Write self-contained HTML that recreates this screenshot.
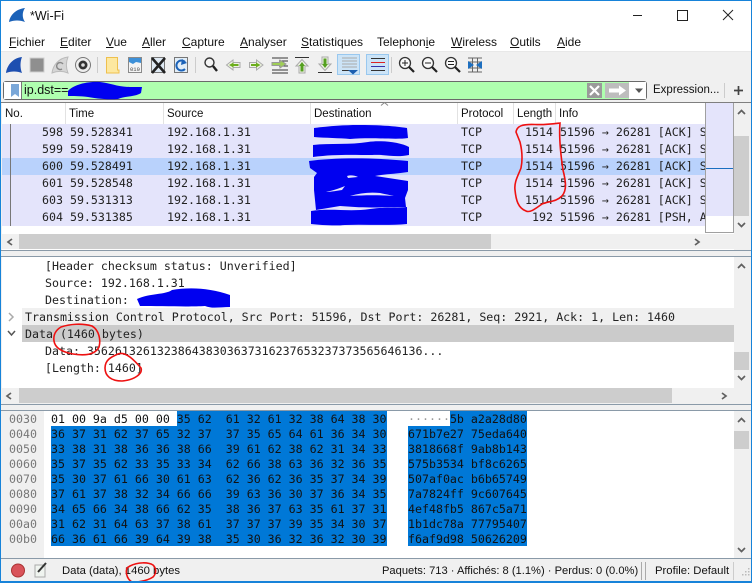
<!DOCTYPE html>
<html><head><meta charset="utf-8">
<style>
html,body{margin:0;padding:0;width:752px;height:583px;overflow:hidden;background:#f0f0f0}
*{box-sizing:border-box}
div,span.a{position:absolute}
.t{position:absolute;white-space:pre;font:12px/16px "Liberation Sans",sans-serif;color:#111}
.m{position:absolute;white-space:pre;font:11.62px/15px "DejaVu Sans Mono","Liberation Mono",monospace;color:#222}
.r{position:absolute;left:2px;width:703px;height:17px;background:#e4e4fb}
.s{position:absolute;width:1px;top:103px;height:21px;background:#e2e2e2}
.h{position:absolute;white-space:pre;font:11.62px/15px "DejaVu Sans Mono","Liberation Mono",monospace;color:#111}
.sel{position:absolute;background:#0078d7}
u{text-decoration:underline}
svg{position:absolute;left:0;top:0;overflow:visible}
</style></head>
<body>
<div style="left:0;top:0;width:752px;height:52px;background:#fff"></div>
<div style="left:0;top:51px;width:752px;height:1px;background:#e8e8e8"></div>
<div class="t" style="left:30px;top:8px;font-size:12.5px">*Wi-Fi</div>

<div class="t" style="left:9px;top:34px"><u>F</u>ichier</div>
<div class="t" style="left:60px;top:34px"><u>E</u>diter</div>
<div class="t" style="left:106px;top:34px"><u>V</u>ue</div>
<div class="t" style="left:142px;top:34px"><u>A</u>ller</div>
<div class="t" style="left:182px;top:34px"><u>C</u>apture</div>
<div class="t" style="left:240px;top:34px"><u>A</u>nalyser</div>
<div class="t" style="left:301px;top:34px"><u>S</u>tatistiques</div>
<div class="t" style="left:377px;top:34px">Telephon<u>i</u>e</div>
<div class="t" style="left:451px;top:34px"><u>W</u>ireless</div>
<div class="t" style="left:510px;top:34px"><u>O</u>utils</div>
<div class="t" style="left:557px;top:34px"><u>A</u>ide</div>

<!-- toolbar active boxes -->
<div style="left:337px;top:54px;width:23px;height:21px;background:#cce4f7;border:1px solid #99c8ef"></div>
<div style="left:366px;top:54px;width:23px;height:21px;background:#cce4f7;border:1px solid #99c8ef"></div>

<!-- filter bar -->
<div style="left:3px;top:81px;width:644px;height:19px;background:#afffaf;border:1px solid #6a6a6a;border-radius:3px"></div>
<div style="left:4px;top:82px;width:18px;height:17px;background:#fff;border-right:1px solid #777"></div>
<div style="left:587px;top:83px;width:15px;height:15px;background:#9a9a9a"></div>
<div style="left:605px;top:83px;width:24px;height:15px;background:#bdbdbd"></div>
<div style="left:629px;top:82px;width:17px;height:17px;background:#fff"></div>
<div class="t" style="left:24px;top:82px;font-size:12.5px">ip.dst==</div>
<div class="t" style="left:653px;top:82px;font-size:11.5px">Expression...</div>
<div style="left:724px;top:83px;width:1px;height:15px;background:#ccc"></div>
<div style="left:0;top:102px;width:752px;height:1px;background:#7f7f7f"></div>

<!-- packet list -->
<div style="left:2px;top:103px;width:703px;height:123px;background:#fff"></div>
<div style="left:2px;top:226px;width:732px;height:24px;background:#fff"></div>
<div class="s" style="left:65px"></div><div class="s" style="left:163px"></div><div class="s" style="left:310px"></div><div class="s" style="left:457px"></div><div class="s" style="left:513px"></div><div class="s" style="left:555px"></div>
<div class="t" style="left:5px;top:106px;font-size:11.5px">No.</div>
<div class="t" style="left:69px;top:106px;font-size:11.5px">Time</div>
<div class="t" style="left:167px;top:106px;font-size:11.5px">Source</div>
<div class="t" style="left:314px;top:106px;font-size:11.5px">Destination</div>
<div class="t" style="left:461px;top:106px;font-size:11.5px">Protocol</div>
<div class="t" style="left:517px;top:106px;font-size:11.5px">Length</div>
<div class="t" style="left:559px;top:106px;font-size:11.5px">Info</div>

<div class="r" style="top:124px"></div>
<div class="r" style="top:141px"></div>
<div class="r" style="top:158px;background:#b9d2fc"></div>
<div class="r" style="top:175px"></div>
<div class="r" style="top:192px"></div>
<div class="r" style="top:209px"></div>
<div style="left:10px;top:124px;width:1px;height:102px;background:#777"></div>

<div class="m" style="left:42px;top:125px">598 59.528341</div><div class="m" style="left:167px;top:125px">192.168.1.31</div><div class="m" style="left:461px;top:125px">TCP</div><div class="m" style="left:525px;top:125px">1514 51596 → 26281 [ACK] S</div>
<div class="m" style="left:42px;top:142px">599 59.528419</div><div class="m" style="left:167px;top:142px">192.168.1.31</div><div class="m" style="left:461px;top:142px">TCP</div><div class="m" style="left:525px;top:142px">1514 51596 → 26281 [ACK] S</div>
<div class="m" style="left:42px;top:159px">600 59.528491</div><div class="m" style="left:167px;top:159px">192.168.1.31</div><div class="m" style="left:461px;top:159px">TCP</div><div class="m" style="left:525px;top:159px">1514 51596 → 26281 [ACK] S</div>
<div class="m" style="left:42px;top:176px">601 59.528548</div><div class="m" style="left:167px;top:176px">192.168.1.31</div><div class="m" style="left:461px;top:176px">TCP</div><div class="m" style="left:525px;top:176px">1514 51596 → 26281 [ACK] S</div>
<div class="m" style="left:42px;top:193px">603 59.531313</div><div class="m" style="left:167px;top:193px">192.168.1.31</div><div class="m" style="left:461px;top:193px">TCP</div><div class="m" style="left:525px;top:193px">1514 51596 → 26281 [ACK] S</div>
<div class="m" style="left:42px;top:210px">604 59.531385</div><div class="m" style="left:167px;top:210px">192.168.1.31</div><div class="m" style="left:461px;top:210px">TCP</div><div class="m" style="left:532px;top:210px">192 51596 → 26281 [PSH, A</div>

<!-- minimap -->
<div style="left:705px;top:103px;width:29px;height:130px;background:#fff;border:1px solid #a0a0a0;border-top:0"></div>
<div style="left:706px;top:103px;width:27px;height:113px;background:#e4e4fb"></div>
<div style="left:706px;top:168px;width:27px;height:1px;background:#1a6fc0"></div>
<!-- list scrollbars -->
<div style="left:734px;top:103px;width:16px;height:131px;background:#f0f0f0"></div>
<div style="left:734px;top:136px;width:15px;height:80px;background:#cdcdcd"></div>
<div style="left:19px;top:234px;width:472px;height:15px;background:#cdcdcd"></div>
<div style="left:0;top:234px;width:19px;height:15px;background:#f0f0f0"></div>
<div style="left:491px;top:234px;width:243px;height:15px;background:#f0f0f0"></div>
<div style="left:0;top:250px;width:752px;height:1px;background:#8a9aa8"></div>

<!-- details pane -->
<div style="left:2px;top:256px;width:732px;height:132px;background:#fff"></div>
<div style="left:0;top:256px;width:752px;height:1px;background:#8a9aa8"></div>
<div style="left:22px;top:308px;width:712px;height:17px;background:#f0f0f0"></div>
<div style="left:22px;top:325px;width:712px;height:17px;background:#cbcbcb"></div>
<div class="m" style="left:45px;top:259px">[Header checksum status: Unverified]</div>
<div class="m" style="left:45px;top:276px">Source: 192.168.1.31</div>
<div class="m" style="left:45px;top:293px">Destination:</div>
<div class="m" style="left:25px;top:310px">Transmission Control Protocol, Src Port: 51596, Dst Port: 26281, Seq: 2921, Ack: 1, Len: 1460</div>
<div class="m" style="left:25px;top:327px">Data (1460 bytes)</div>
<div class="m" style="left:45px;top:344px">Data: 356261326132386438303637316237653237373565646136...</div>
<div class="m" style="left:45px;top:361px">[Length: 1460]</div>
<div style="left:734px;top:257px;width:16px;height:131px;background:#f0f0f0"></div>
<div style="left:734px;top:352px;width:15px;height:18px;background:#cdcdcd"></div>
<div style="left:0;top:388px;width:19px;height:15px;background:#f0f0f0"></div>
<div style="left:19px;top:388px;width:653px;height:15px;background:#cdcdcd"></div>
<div style="left:672px;top:388px;width:62px;height:15px;background:#f0f0f0"></div>
<div style="left:0;top:404px;width:752px;height:1px;background:#8a9aa8"></div>

<!-- hex pane -->
<div style="left:2px;top:410px;width:732px;height:148px;background:#fff"></div>
<div style="left:2px;top:411px;width:42px;height:147px;background:#f0f0f0"></div>
<div style="left:0;top:410px;width:752px;height:1px;background:#8a9aa8"></div>
<div class="sel" style="left:177px;top:411px;width:210px;height:15px"></div>
<div class="sel" style="left:51px;top:426px;width:336px;height:120px"></div>
<div class="sel" style="left:450px;top:411px;width:77px;height:15px"></div>
<div class="sel" style="left:408px;top:426px;width:119px;height:120px"></div>

<div class="h" style="left:9px;top:412px;color:#777">0030</div><div class="h" style="left:51px;top:412px">01 00 9a d5 00 00 35 62  61 32 61 32 38 64 38 30</div><div class="h" style="left:408px;top:412px"><span style="color:#999">······</span>5b a2a28d80</div>
<div class="h" style="left:9px;top:427px;color:#777">0040</div><div class="h" style="left:51px;top:427px">36 37 31 62 37 65 32 37  37 35 65 64 61 36 34 30</div><div class="h" style="left:408px;top:427px">671b7e27 75eda640</div>
<div class="h" style="left:9px;top:442px;color:#777">0050</div><div class="h" style="left:51px;top:442px">33 38 31 38 36 36 38 66  39 61 62 38 62 31 34 33</div><div class="h" style="left:408px;top:442px">3818668f 9ab8b143</div>
<div class="h" style="left:9px;top:457px;color:#777">0060</div><div class="h" style="left:51px;top:457px">35 37 35 62 33 35 33 34  62 66 38 63 36 32 36 35</div><div class="h" style="left:408px;top:457px">575b3534 bf8c6265</div>
<div class="h" style="left:9px;top:472px;color:#777">0070</div><div class="h" style="left:51px;top:472px">35 30 37 61 66 30 61 63  62 36 62 36 35 37 34 39</div><div class="h" style="left:408px;top:472px">507af0ac b6b65749</div>
<div class="h" style="left:9px;top:487px;color:#777">0080</div><div class="h" style="left:51px;top:487px">37 61 37 38 32 34 66 66  39 63 36 30 37 36 34 35</div><div class="h" style="left:408px;top:487px">7a7824ff 9c607645</div>
<div class="h" style="left:9px;top:502px;color:#777">0090</div><div class="h" style="left:51px;top:502px">34 65 66 34 38 66 62 35  38 36 37 63 35 61 37 31</div><div class="h" style="left:408px;top:502px">4ef48fb5 867c5a71</div>
<div class="h" style="left:9px;top:517px;color:#777">00a0</div><div class="h" style="left:51px;top:517px">31 62 31 64 63 37 38 61  37 37 37 39 35 34 30 37</div><div class="h" style="left:408px;top:517px">1b1dc78a 77795407</div>
<div class="h" style="left:9px;top:532px;color:#777">00b0</div><div class="h" style="left:51px;top:532px">66 36 61 66 39 64 39 38  35 30 36 32 36 32 30 39</div><div class="h" style="left:408px;top:532px">f6af9d98 50626209</div>

<div style="left:734px;top:411px;width:16px;height:147px;background:#f0f0f0"></div>
<div style="left:734px;top:431px;width:15px;height:18px;background:#cdcdcd"></div>
<div style="left:0;top:558px;width:752px;height:1px;background:#8a9aa8"></div>

<!-- status bar -->
<div class="t" style="left:62px;top:563px;font-size:11.3px">Data (data), 1460 bytes</div>
<div class="t" style="left:382px;top:563px;font-size:11.15px">Paquets: 713 · Affichés: 8 (1.1%) · Perdus: 0 (0.0%)</div>
<div class="t" style="left:655px;top:563px;font-size:11.3px">Profile: Default</div>
<div style="left:641px;top:562px;width:1px;height:18px;background:#aaa"></div>
<div style="left:645px;top:562px;width:1px;height:18px;background:#aaa"></div>
<div style="left:733px;top:562px;width:1px;height:18px;background:#ccc"></div>

<svg width="752" height="583" viewBox="0 0 752 583">
<!-- title icon -->
<path d="M9 22C10 15 16 9 25 8C22 12 22 18 25 22C20 20 14 20 9 22Z" fill="#1b62b8"/>
<!-- window controls -->
<path d="M633 15.5H642" stroke="#222" fill="none"/>
<rect x="677.5" y="10.5" width="10" height="10" fill="none" stroke="#222"/>
<path d="M723 10L733 20M733 10L723 20" stroke="#222" fill="none"/>

<!-- toolbar icons -->
<path d="M6 73C7 65 13 58 22 57C20 62 20 68 22 73C17 71 11 71 6 73Z" fill="#1d4fb0"/>
<rect x="30" y="58" width="14" height="14" fill="#8f8f8f" stroke="#cfcfcf"/>
<path d="M52 73C53 65 59 58 68 57C66 62 66 68 68 73C63 71 57 71 52 73Z" fill="#d6d6d6" stroke="#bbb"/>
<path d="M63 64a3.5 3.5 0 1 0 -1 5" fill="none" stroke="#888" stroke-width="1.4"/>
<circle cx="83" cy="65" r="7.5" fill="#eee" stroke="#777"/>
<circle cx="83" cy="65" r="4.5" fill="#333"/>
<circle cx="83" cy="65" r="1.8" fill="#ddd"/>
<path d="M97.5 57V73" stroke="#ccc"/>
<path d="M106.5 57.5H117.5V70H119V73H106.5Z" fill="#fde8a0" stroke="#eec04e"/>
<rect x="128.5" y="57.5" width="13" height="15" fill="#f4f4f4" stroke="#8a8a8a"/>
<path d="M129 58H141V63L136 62L133 64L129 62Z" fill="#3d90d8"/>
<text x="130" y="71" font-family="Liberation Mono,monospace" font-size="5.5" fill="#444">010</text>
<rect x="151.5" y="57.5" width="13" height="15" fill="#dfeaf4" stroke="#777"/>
<path d="M152 58L165 73M165 58L152 73" stroke="#222" stroke-width="2.6" fill="none"/>
<rect x="174.5" y="57.5" width="13" height="15" fill="#e2eef8" stroke="#777"/>
<path d="M185 62A5 5 0 1 0 185 69" fill="none" stroke="#1b62b8" stroke-width="2"/>
<path d="M182 59L187 63L181 65Z" fill="#1b62b8"/>
<path d="M195.5 57V73" stroke="#ccc"/>
<circle cx="209.5" cy="62.5" r="4.5" fill="#f4f4f4" stroke="#333" stroke-width="1.4"/>
<path d="M213 66L217 71" stroke="#222" stroke-width="2.4"/>
<path d="M226.5 65L233 60V62.5H240V67.5H233V70Z" fill="#eef2e4" stroke="#aaa"/>
<path d="M229 65L233.500 62.500V64H238.500V66H233.500V67.500Z" fill="#6cae1c"/>
<path d="M263 65L256.500 60V62.500H249.500V67.500H256.500V70Z" fill="#eef2e4" stroke="#aaa"/>
<path d="M260.500 65L256 62.500V64H251V66H256V67.500Z" fill="#6cae1c"/>
<path d="M272 58H288M279 61H288M279 66H288M272 70H288M272 73H288" stroke="#333" fill="none"/>
<path d="M272 62.500H280V60L286 64L280 68V65.500H272Z" fill="#9fce55" stroke="#999"/>
<path d="M295 57.500H309" stroke="#333"/>
<path d="M302 59.500L308 66H305V73H299V66H296Z" fill="#eef2e4" stroke="#aaa"/>
<path d="M302 62L305 66H303.500V71.500H300.500V66H299Z" fill="#55a020"/>
<path d="M318 72.500H332" stroke="#333"/>
<path d="M325 70.500L319 64H322V57H328V64H331Z" fill="#eef2e4" stroke="#aaa"/>
<path d="M325 68L322 64H323.500V58.500H326.500V64H328Z" fill="#55a020"/>
<path d="M342 58H357M342 61H357M342 64H357M342 67H357" stroke="#aaa"/>
<path d="M342 70.500H357" stroke="#333"/>
<path d="M348 70H358L353 74.500Z" fill="#1d5fb0"/>
<path d="M371 58.500H385" stroke="#333"/>
<path d="M371 62.500H385" stroke="#d22"/>
<path d="M371 66.500H385" stroke="#33a"/>
<path d="M371 70.500H385" stroke="#333"/>
<path d="M391.500 57V73" stroke="#ccc"/>
<circle cx="405" cy="63" r="5.500" fill="#fafafa" stroke="#333" stroke-width="1.300"/>
<path d="M402 63H408M405 60V66" stroke="#222" fill="none"/>
<path d="M409 67L414 72" stroke="#222" stroke-width="2.200"/>
<circle cx="428" cy="63" r="5.500" fill="#fafafa" stroke="#333" stroke-width="1.300"/>
<path d="M425 63H431" stroke="#222"/>
<path d="M432 67L437 72" stroke="#222" stroke-width="2.200"/>
<circle cx="451" cy="63" r="5.500" fill="#fafafa" stroke="#333" stroke-width="1.300"/>
<path d="M448 61.500H454M448 64.500H454" stroke="#222"/>
<path d="M455 67L460 72" stroke="#222" stroke-width="2.200"/>
<path d="M468 58H482M468 62H482M468 68H482M468 72H482M472.500 58V72M477.500 58V72" stroke="#666" fill="none"/>
<path d="M468 61L474 65L468 69ZM482 61L476 65L482 69Z" fill="#1d6fc0"/>

<!-- filter controls -->
<path d="M11 84H19V97L15 94L11 97Z" fill="#7aa7d8"/>
<path d="M590 86L599 95M599 86L590 95" stroke="#fff" stroke-width="2.200"/>
<path d="M609 88.500H619V85.500L626 90.500L619 95.500V92.500H609Z" fill="#fff"/>
<path d="M635 88.500H643L639 93Z" fill="#555"/>
<path d="M734 90.500H743M738.500 86V95" stroke="#444" stroke-width="1.700"/>
<path d="M381 105.500L384.500 102.500L388 105.500" stroke="#888" fill="none"/>

<!-- scroll arrows -->
<g stroke="#606060" stroke-width="1.700" fill="none">
<path d="M738 114L741.500 110.500L745 114M738 223L741.500 226.500L745 223"/>
<path d="M12 239L8 242L12 245M695 239L699 242L695 245"/>
<path d="M738 268L741.500 264.500L745 268M738 376L741.500 379.500L745 376"/>
<path d="M11 393L7 396L11 399M722 393L726 396L722 399"/>
<path d="M738 422L741.500 418.500L745 422M738 548L741.500 551.500L745 548"/>
</g>
<path d="M9 313L13 317L9 321" stroke="#aaa" stroke-width="1.500" fill="none"/>
<path d="M8 331L11.500 335L15 331" stroke="#555" stroke-width="1.500" fill="none"/>

<!-- status icons -->
<circle cx="18" cy="570.500" r="6.500" fill="#d9535a" stroke="#a33"/>
<rect x="35" y="565" width="10" height="12" fill="#f0f4f0" stroke="#aaa"/>
<path d="M38 572L46 563" stroke="#333" stroke-width="2"/>
<g fill="#bbb"><rect x="748" y="568" width="1.500" height="1.500"/><rect x="745" y="571" width="1.500" height="1.500"/><rect x="748" y="571" width="1.500" height="1.500"/><rect x="742" y="574" width="1.500" height="1.500"/><rect x="745" y="574" width="1.500" height="1.500"/><rect x="748" y="574" width="1.500" height="1.500"/></g>

<!-- blue scribbles -->
<g fill="#0000f0">
<path d="M68 91C72 86 85 81 100 82C110 83 118 87 130 87L142 87L141 93C135 97 125 96 118 99C105 100 95 98 88 97C80 96 72 96 68 96Z"/>
<path d="M314 128C330 126 345 125 358 125C380 125 395 126 407 128L408 138C395 140 375 137 350 139C340 138 325 138 314 137Z"/>
<path d="M313 145C330 143 350 145 368 142C380 140 400 142 409 147V155C395 158 385 154 372 155C355 155 335 154 313 157Z"/>
<path d="M309 161C330 158 370 157 408 161V172C395 174 385 174 375 176L408 181V190L405 198L406 207C390 207 370 208 355 207L340 206L316 210L314 190L314 177L317 173L310 168Z"/>
<path d="M311 211C330 208 350 212 370 209C385 207 395 208 407 207V224C385 226 365 224 345 225C335 226 320 225 311 224Z"/>
<path d="M137 299C150 293 165 295 172 290C190 287 210 288 230 295V307C220 307 212 309 205 306C190 307 160 306 140 306Z"/>
</g>
<g fill="#e4e4fb">
<path d="M326 192C335 190 340 188 345 186L342 190C335 191 330 192 326 192Z"/>
<path d="M350 196C360 193 370 192 380 193C385 194 390 195 394 196C380 195 365 195 350 196Z"/>
<path d="M347 176C350 175 354 175 358 177L348 178Z"/>
</g>

<!-- red marks -->
<g fill="none" stroke="#ee1111" stroke-width="1.600">
<path d="M516 132C517 126 522 124 535 124.500C545 125 552 124 560 123C559 135 560 150 563 170C566 182 567 190 562 196C556 202 549 201 542 204C535 209 530 213 526 211C518 208 516 200 515 190C514 182 518 176 521 168C523 158 522 150 520 142Z"/>
<path d="M61 327C70 324 82 323 92 326C99 330 101 340 99 347C95 355 85 356 73 354C62 352 55 348 54 341C53 334 56 330 61 327Z"/>
<path d="M118 354C126 351 135 361 141 368C143 374 134 380 122 381C111 381 105 376 105 368C105 360 111 357 118 354Z"/>
<path d="M130 566C138 562 148 562 153 565C157 569 156 574 153 577C146 582 138 581 134 583C128 581 125 574 127 568Z"/>
</g>

<!-- window border -->
<path d="M0.500 583V0.500H751.500V583" fill="none" stroke="#1783d9"/>
<path d="M0 582H752" stroke="#1783d9" stroke-width="2"/>
</svg>
</body></html>
